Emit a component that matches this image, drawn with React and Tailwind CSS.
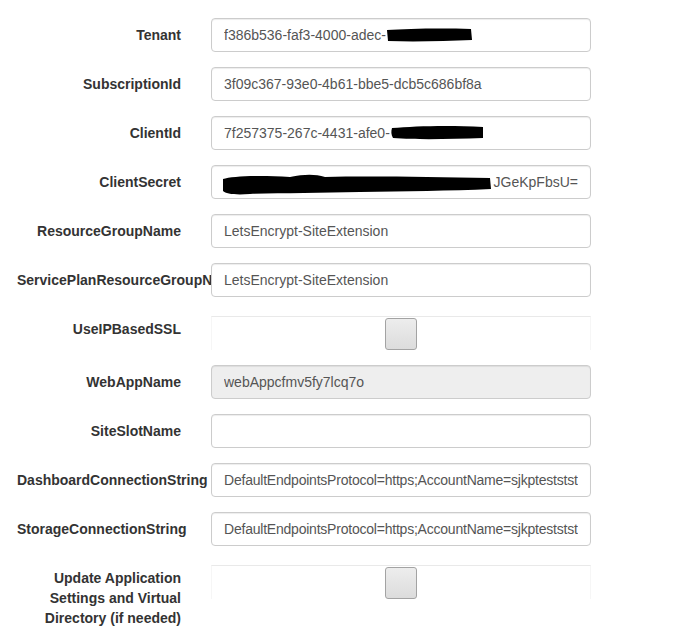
import React from "react";

const font = { fontFamily: '"Liberation Sans", Arial, Helvetica, sans-serif' };

// black marker strokes that hide the secrets
function Blot({ w, h, d }) {
  return (
    <svg width={w} height={h} viewBox={`0 0 ${w} ${h}`} className="inline-block align-[-2px]">
      <path d={d} fill="#000" />
    </svg>
  );
}

function Field({ label, children }) {
  return (
    <div className="flex mb-[15px]">
      <label className="w-[194px] shrink-0 px-[15px] pt-[7px] text-right text-[14px] leading-[20px] font-bold text-[#333]">
        {label}
      </label>
      <div className="w-[410px] px-[15px] relative">{children}</div>
    </div>
  );
}

function Input({ children, disabled, right, tight }) {
  return (
    <div
      className={
        "relative h-[34px] border border-[#ccc] rounded-[4px] px-[12px] py-[6px] text-[14px] leading-[20px] text-[#555] shadow-[inset_0_1px_1px_rgba(0,0,0,0.075)] " +
        (disabled ? "bg-[#eee]" : "bg-white")
      }
    >
      <div
        className={
          "h-[20px] whitespace-nowrap overflow-hidden" +
          (right ? " text-right" : "") +
          (tight ? " tracking-[-0.22px]" : "")
        }
      >
        {children}
      </div>
    </div>
  );
}

function Check() {
  return (
    <div className="mt-[4px] h-[34px] border-t border-x border-t-[#e9e9e9] border-x-[#f6f6f6] flex justify-center">
      <div className="mt-[1px] w-[32px] h-[32px] rounded-[3px] border border-[#a3a3a3] bg-gradient-to-b from-[#ededed] to-[#dcdcdc]" />
    </div>
  );
}

export default function App() {
  return (
    <div className="min-h-[639px] w-[688px] bg-white pl-[2px] pt-[18px]" style={font}>
      <Field label="Tenant">
        <Input>
          f386b536-faf3-4000-adec-
          <Blot w={86} h={14} d="M1,2 C20,1 50,0 85,1 L86,12 C60,13 30,14 2,13 Z" />
        </Input>
      </Field>
      <Field label="SubscriptionId">
        <Input>3f09c367-93e0-4b61-bbe5-dcb5c686bf8a</Input>
      </Field>
      <Field label="ClientId">
        <Input>
          7f257375-267c-4431-afe0-
          <Blot w={94} h={15} d="M2,3 C25,1 60,0 93,2 L93,13 C60,14 30,15 3,13 C1,10 1,6 2,3 Z" />
        </Input>
      </Field>
      <Field label="ClientSecret">
        <Input right>
          JGeKpFbsU=
          <svg width="272" height="30" viewBox="0 0 272 30" className="absolute left-[8px] top-[4px]">
            <path
              d="M3,9 C12,6 40,5 70,7 C85,4 95,4 105,7 C150,6 210,7 270,8 L271,19 C230,21 185,21 140,22 C100,23 60,23 30,24 C15,25 6,24 3,21 Z"
              fill="#000"
            />
          </svg>
        </Input>
      </Field>
      <Field label="ResourceGroupName">
        <Input>LetsEncrypt-SiteExtension</Input>
      </Field>
      <Field label="ServicePlanResourceGroupName">
        <Input>LetsEncrypt-SiteExtension</Input>
      </Field>
      <Field label="UseIPBasedSSL">
        <Check />
      </Field>
      <Field label="WebAppName">
        <Input disabled>webAppcfmv5fy7lcq7o</Input>
      </Field>
      <Field label="SiteSlotName">
        <Input />
      </Field>
      <Field label="DashboardConnectionString">
        <Input tight>DefaultEndpointsProtocol=https;AccountName=sjkpteststst</Input>
      </Field>
      <Field label="StorageConnectionString">
        <Input tight>DefaultEndpointsProtocol=https;AccountName=sjkpteststst</Input>
      </Field>
      <Field label="Update Application Settings and Virtual Directory (if needed)">
        <Check />
      </Field>
    </div>
  );
}
